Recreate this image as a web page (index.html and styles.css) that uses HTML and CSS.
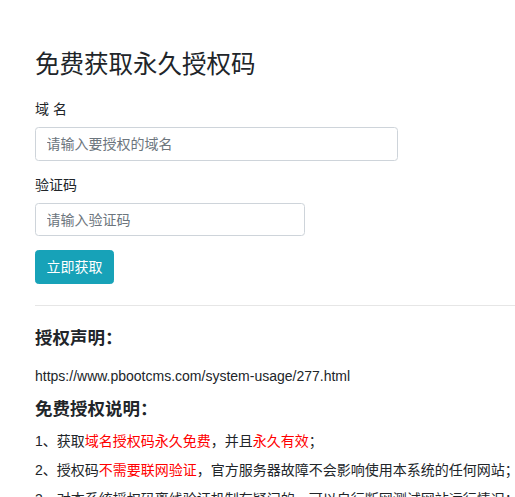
FILE: index.html
```html
<!DOCTYPE html>
<html lang="zh-CN">
<head>
<meta charset="utf-8">
<title>免费获取永久授权码</title>
<link rel="stylesheet" href="styles.css">
</head>
<body>
<div class="container">
  <h3 class="title">免费获取永久授权码</h3>
  <form class="form">
    <div class="form-group">
      <label class="label">域 名</label>
      <input class="form-control wide" type="text" placeholder="请输入要授权的域名">
    </div>
    <div class="form-group">
      <label class="label">验证码</label>
      <input class="form-control narrow" type="text" placeholder="请输入验证码">
    </div>
    <button class="btn" type="button">立即获取</button>
  </form>
  <hr class="divider">
  <h5 class="section-title first">授权声明：</h5>
  <p class="url">https://www.pbootcms.com/system-usage/277.html</p>
  <h5 class="section-title second">免费授权说明：</h5>
  <p class="item">1、获取<span class="red">域名授权码永久免费</span>，并且<span class="red">永久有效</span>；</p>
  <p class="item">2、授权码<span class="red">不需要联网验证</span>，官方服务器故障不会影响使用本系统的任何网站；</p>
  <p class="item">3、对本系统授权码离线验证机制有疑问的，可以自行断网测试网站运行情况；</p>
</div>
</body>
</html>
```

FILE: styles.css
```css
* { box-sizing: border-box; }
html, body {
  margin: 0;
  padding: 0;
  background: #fff;
}
body {
  font-family: "Liberation Sans", "Noto Sans CJK SC", sans-serif;
  font-size: 14px;
  line-height: 21px;
  color: #212529;
  overflow: hidden;
}
.container {
  padding: 50px 0 0 35px;
}
.title {
  margin: 0 0 20px;
  font-size: 24.5px;
  line-height: 29.4px;
  font-weight: 400;
  color: #212529;
}
.form { margin: 0; }
.form-group { margin-bottom: 14px; }
.label {
  display: block;
  margin-bottom: 7px;
  line-height: 21px;
}
.form-control {
  display: block;
  height: 33.5px;
  padding: 5.25px 10.5px;
  font-family: inherit;
  font-size: 14px;
  line-height: 21px;
  color: #495057;
  background: #fff;
  border: 1px solid #ced4da;
  border-radius: 3.5px;
  outline: none;
}
.form-control::placeholder { color: #6c757d; opacity: 1; }
.wide { width: 363px; }
.narrow { width: 270px; }
.btn {
  display: block;
  height: 33.5px;
  padding: 5.25px 10.5px;
  font-family: inherit;
  font-size: 14px;
  line-height: 21px;
  color: #fff;
  background: #17a2b8;
  border: 1px solid #17a2b8;
  border-radius: 3.5px;
}
.divider {
  margin: 21px 0 22px;
  border: 0;
  border-top: 1px solid #e6e6e6;
  height: 0;
}
.section-title {
  margin: 0;
  font-size: 17.5px;
  line-height: 21px;
  font-weight: 700;
  color: #212529;
}
.section-title.first { margin-bottom: 17px; }
.section-title.second { margin-bottom: 11px; }
.url { margin: 0 0 12px; }
.item {
  margin: 0 0 8px;
  white-space: nowrap;
}
.red { color: #ff0000; }
```
